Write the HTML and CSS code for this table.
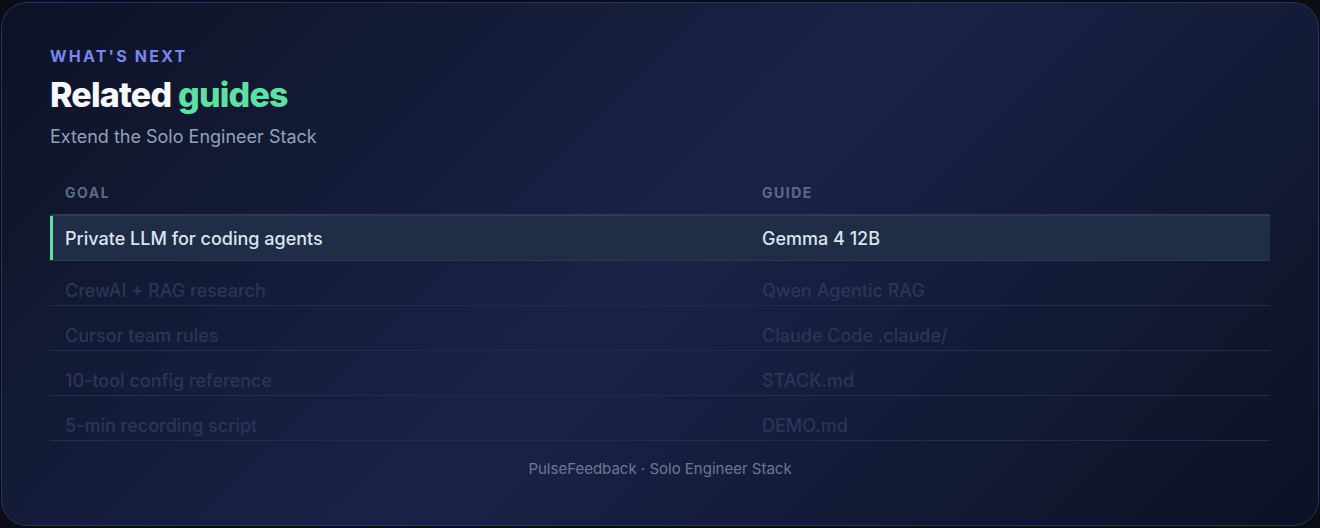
FILE: index.html
```html
<!DOCTYPE html>
<html lang="en">
<head>
    <meta charset="UTF-8">
    <title>Related guides</title>
    <link rel="stylesheet" href="styles.css">
</head>
<body>
    <div class="card">
        <div class="eyebrow">WHAT'S NEXT</div>
        <h2 class="title">Related <span class="accent">guides</span></h2>
        <p class="subtitle">Extend the Solo Engineer Stack</p>

        <div class="guides">
            <div class="row head">
                <div class="cell">GOAL</div>
                <div class="cell">GUIDE</div>
            </div>
            <div class="row active">
                <div class="cell">Private LLM for coding agents</div>
                <div class="cell">Gemma 4 12B</div>
            </div>
            <div class="row dim">
                <div class="cell">CrewAI + RAG research</div>
                <div class="cell">Qwen Agentic RAG</div>
            </div>
            <div class="row dim">
                <div class="cell">Cursor team rules</div>
                <div class="cell">Claude Code .claude/</div>
            </div>
            <div class="row dim">
                <div class="cell">10-tool config reference</div>
                <div class="cell">STACK.md</div>
            </div>
            <div class="row dim">
                <div class="cell">5-min recording script</div>
                <div class="cell">DEMO.md</div>
            </div>
        </div>

        <div class="footer">PulseFeedback · Solo Engineer Stack</div>
    </div>
</body>
</html>
```

FILE: styles.css
```css
body {
    margin: 0;
    padding: 2px 1px 2px 1px;
    background-color: #0b0d14;
    font-family: Inter, "Noto Sans", sans-serif;
}
.card {
    box-sizing: border-box;
    height: 524px;
    padding: 42px 48px 0 48px;
    border: 1px solid #283163;
    border-radius: 26px;
    background: linear-gradient(135deg, #0d1225 0%, #1a2347 50%, #0c1124 100%);
}
.eyebrow {
    font-size: 16px;
    font-weight: 700;
    letter-spacing: 2.2px;
    color: #7c84f2;
    line-height: 22px;
}
.title {
    margin: 6px 0 0 0;
    font-size: 34px;
    font-weight: 800;
    letter-spacing: -0.8px;
    line-height: 44px;
    color: #f6f8fc;
}
.accent {
    color: #5fe0a2;
}
.subtitle {
    margin: 8px 0 0 0;
    font-size: 18px;
    line-height: 24px;
    color: #94a0b9;
}
.guides {
    margin-top: 22px;
}
.row {
    display: grid;
    grid-template-columns: 697px 1fr;
    height: 44px;
    align-items: center;
    border-bottom: 1px solid #222d4a;
    font-size: 18px;
    font-weight: 500;
    color: #2b3655;
}
.cell {
    padding-left: 15px;
}
.row.head {
    height: 43px;
    border-bottom: 2px solid #2c3a55;
    font-size: 14px;
    font-weight: 700;
    letter-spacing: 1.5px;
    color: #5d6a86;
}
.row.active {
    background-color: #1f2d46;
    border-bottom-color: #2a3850;
    color: #dde3ee;
    box-shadow: inset 3px 0 0 #5fe0a2;
}
.row.dim .cell {
    padding-top: 14px;
}
.footer {
    margin-top: 18px;
    text-align: center;
    font-size: 15px;
    line-height: 20px;
    color: #6b7894;
}
```
